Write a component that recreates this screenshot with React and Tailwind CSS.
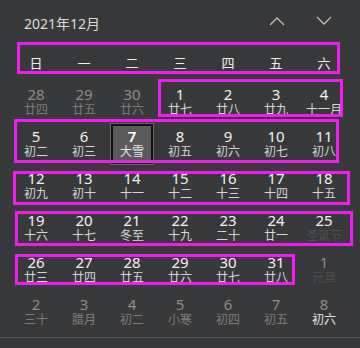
const rows = [
  [
    ["28", "廿四", "o"], ["29", "廿五", "o"], ["30", "廿六", "o"],
    ["1", "廿七"], ["2", "廿八"], ["3", "廿九"], ["4", "十一月"],
  ],
  [
    ["5", "初二"], ["6", "初三"], ["7", "大雪", "sel"], ["8", "初五"],
    ["9", "初六"], ["10", "初七"], ["11", "初八"],
  ],
  [
    ["12", "初九"], ["13", "初十"], ["14", "十一"], ["15", "十二"],
    ["16", "十三"], ["17", "十四"], ["18", "十五"],
  ],
  [
    ["19", "十六"], ["20", "十七"], ["21", "冬至"], ["22", "十九"],
    ["23", "二十"], ["24", "廿一"], ["25", "圣诞节", "fest"],
  ],
  [
    ["26", "廿三"], ["27", "廿四"], ["28", "廿五"], ["29", "廿六"],
    ["30", "廿七"], ["31", "廿八"], ["1", "元旦", "ofest"],
  ],
  [
    ["2", "三十", "o"], ["3", "腊月", "o"], ["4", "初二", "o"], ["5", "小寒", "o"],
    ["6", "初四", "o"], ["7", "初五", "o"], ["8", "初六", "hover"],
  ],
];

const weekdays = ["日", "一", "二", "三", "四", "五", "六"];

function DayCell({ day, lunar, kind }) {
  const other = kind === "o" || kind === "ofest" || kind === "hover";
  const numColor = other ? "text-[#8c8c8c]" : "text-[#f2f2f2]";
  let lunarColor = "text-[#d6d6d6]";
  if (kind === "o") lunarColor = "text-[#7c7c7c]";
  if (kind === "fest" || kind === "ofest") lunarColor = "text-[#4c4d4f]";
  if (kind === "hover") lunarColor = "text-[#e6e6e6]";

  if (kind === "sel") {
    return (
      <div className="h-[42px] flex justify-center pt-[2px]">
        <div className="w-[42px] h-[40px] border-2 border-[#111] outline outline-1 outline-[#666] bg-[#5a5a5a] flex flex-col items-center pt-[2px]">
          <span className="text-[15px] leading-[16px] font-semibold text-white">{day}</span>
          <span className="text-[12px] leading-[15px] text-[#e6e6e6]">{lunar}</span>
        </div>
      </div>
    );
  }

  return (
    <div className="h-[42px] flex flex-col items-center pt-[6px]">
      <span className={`text-[15px] leading-[16px] ${numColor}`}>{day}</span>
      <span className={`text-[12px] leading-[15px] ${lunarColor}`}>{lunar}</span>
    </div>
  );
}

export default function App() {
  return (
    <div
      className="relative w-[360px] h-[348px] bg-[#38393b] overflow-hidden"
      style={{ fontFamily: '"Noto Sans", "Noto Sans CJK SC", sans-serif' }}
    >
      {/* header */}
      <div className="h-[42px] flex items-start pt-[14px] pl-[24px] pr-[28px]">
        <span className="text-[14px] leading-[20px] text-[#dcdcdc]">2021年12月</span>
        <div className="ml-auto flex gap-[31px] pt-[2px]">
          <svg width="16" height="10" viewBox="0 0 16 10" fill="none" stroke="#bdbdbd" strokeWidth="1.3">
            <path d="M1 9 L8 2 L15 9" />
          </svg>
          <svg width="16" height="10" viewBox="0 0 16 10" fill="none" stroke="#bdbdbd" strokeWidth="1.3">
            <path d="M1 1 L8 8 L15 1" />
          </svg>
        </div>
      </div>

      <div className="px-3">
        <div className="grid grid-cols-7 h-[38px] items-center">
          {weekdays.map((w) => (
            <div key={w} className="text-center text-[13px] leading-[16px] pt-[4px] text-[#f0f0f0]">
              {w}
            </div>
          ))}
        </div>
        {rows.map((row, i) => (
          <div key={i} className="grid grid-cols-7">
            {row.map(([d, l, k], j) => (
              <DayCell key={j} day={d} lunar={l} kind={k} />
            ))}
          </div>
        ))}
      </div>

      <div className="mt-[5px] h-px bg-[#57585a]" />

      {/* annotation boxes */}
      <div className="absolute left-[17px] top-[42px] w-[323px] h-[32px] border-[3px] border-[#f21bf0]" />
      <div className="absolute left-[158px] top-[79px] w-[185px] h-[38px] border-[3px] border-[#f21bf0]" />
      <div className="absolute left-[14px] top-[119px] w-[325px] h-[44px] border-[3px] border-[#f21bf0]" />
      <div className="absolute left-[13px] top-[171px] w-[337px] h-[34px] border-[3px] border-[#f21bf0]" />
      <div className="absolute left-[15px] top-[211px] w-[338px] h-[35px] border-[3px] border-[#f21bf0]" />
      <div className="absolute left-[15px] top-[254px] w-[280px] h-[31px] border-[3px] border-[#f21bf0]" />
    </div>
  );
}
